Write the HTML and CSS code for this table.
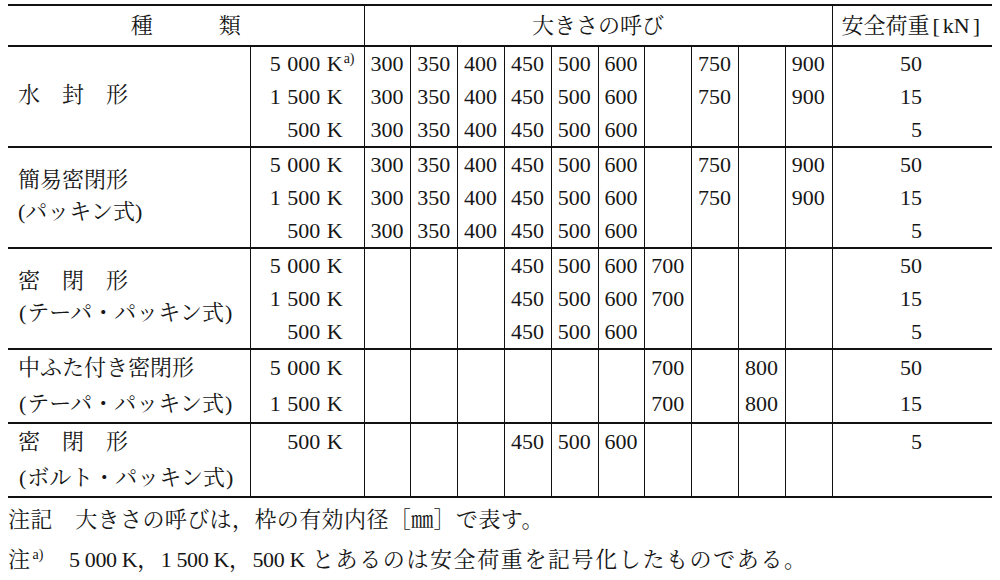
FILE: index.html
```html
<!DOCTYPE html>
<html lang="ja">
<head>
<meta charset="utf-8">
<title>安全荷重</title>
<link rel="stylesheet" href="styles.css">
</head>
<body>
<div class="page">
<table class="spec">
<colgroup>
<col class="c-type"><col class="c-load">
<col class="c-size"><col class="c-size"><col class="c-size"><col class="c-size"><col class="c-size">
<col class="c-size"><col class="c-size"><col class="c-size"><col class="c-size"><col class="c-size">
<col class="c-safe">
</colgroup>
<thead>
<tr class="hrow">
<th colspan="2" class="h-type">種　　　類</th>
<th colspan="10" class="h-size">大きさの呼び</th>
<th class="h-safe">安全荷重<span class="br">[</span>kN<span class="br">]</span></th>
</tr>
</thead>
<tbody>
<!-- 水封形 -->
<tr class="g-first r">
<td rowspan="3" class="type">水　封　形</td>
<td class="load">5 000 K<span class="sup">a)</span></td>
<td>300</td><td>350</td><td>400</td><td>450</td><td>500</td><td>600</td><td></td><td>750</td><td></td><td>900</td>
<td class="safe">50</td>
</tr>
<tr class="r">
<td class="load">1 500 K</td>
<td>300</td><td>350</td><td>400</td><td>450</td><td>500</td><td>600</td><td></td><td>750</td><td></td><td>900</td>
<td class="safe">15</td>
</tr>
<tr class="r">
<td class="load">500 K</td>
<td>300</td><td>350</td><td>400</td><td>450</td><td>500</td><td>600</td><td></td><td></td><td></td><td></td>
<td class="safe">5</td>
</tr>
<!-- 簡易密閉形 -->
<tr class="g-first r">
<td rowspan="3" class="type">簡易密閉形<br>(パッキン式)</td>
<td class="load">5 000 K</td>
<td>300</td><td>350</td><td>400</td><td>450</td><td>500</td><td>600</td><td></td><td>750</td><td></td><td>900</td>
<td class="safe">50</td>
</tr>
<tr class="r">
<td class="load">1 500 K</td>
<td>300</td><td>350</td><td>400</td><td>450</td><td>500</td><td>600</td><td></td><td>750</td><td></td><td>900</td>
<td class="safe">15</td>
</tr>
<tr class="r">
<td class="load">500 K</td>
<td>300</td><td>350</td><td>400</td><td>450</td><td>500</td><td>600</td><td></td><td></td><td></td><td></td>
<td class="safe">5</td>
</tr>
<!-- 密閉形 テーパ -->
<tr class="g-first r">
<td rowspan="3" class="type">密　閉　形<br><span class="paren">(</span>テーパ・パッキン式<span class="paren">)</span></td>
<td class="load">5 000 K</td>
<td></td><td></td><td></td><td>450</td><td>500</td><td>600</td><td>700</td><td></td><td></td><td></td>
<td class="safe">50</td>
</tr>
<tr class="r">
<td class="load">1 500 K</td>
<td></td><td></td><td></td><td>450</td><td>500</td><td>600</td><td>700</td><td></td><td></td><td></td>
<td class="safe">15</td>
</tr>
<tr class="r">
<td class="load">500 K</td>
<td></td><td></td><td></td><td>450</td><td>500</td><td>600</td><td></td><td></td><td></td><td></td>
<td class="safe">5</td>
</tr>
<!-- 中ふた付き密閉形 -->
<tr class="g-first r2">
<td rowspan="2" class="type tall">中ふた付き密閉形<br><span class="paren">(</span>テーパ・パッキン式<span class="paren">)</span></td>
<td class="load">5 000 K</td>
<td></td><td></td><td></td><td></td><td></td><td></td><td>700</td><td></td><td>800</td><td></td>
<td class="safe">50</td>
</tr>
<tr class="r2">
<td class="load">1 500 K</td>
<td></td><td></td><td></td><td></td><td></td><td></td><td>700</td><td></td><td>800</td><td></td>
<td class="safe">15</td>
</tr>
<!-- 密閉形 ボルト -->
<tr class="g-first r2">
<td rowspan="2" class="type tall">密　閉　形<br><span class="paren">(</span>ボルト・パッキン式<span class="paren">)</span></td>
<td class="load">500 K</td>
<td></td><td></td><td></td><td>450</td><td>500</td><td>600</td><td></td><td></td><td></td><td></td>
<td class="safe">5</td>
</tr>
<tr class="r2 last">
<td class="load"></td>
<td></td><td></td><td></td><td></td><td></td><td></td><td></td><td></td><td></td><td></td>
<td class="safe"></td>
</tr>
</tbody>
</table>
<div class="notes">
<p class="note">注記　大きさの呼びは，枠の有効内径［㎜］で表す。</p>
<p class="note note-wide">注<span class="nsup">a)</span>　<span class="num">5 000 K</span>，<span class="num">1 500 K</span>，<span class="num">500 K</span> とあるのは安全荷重を記号化したものである。</p>
</div>
</div>
</body>
</html>
```

FILE: styles.css
```css
html, body {
  margin: 0;
  padding: 0;
  background: #ffffff;
}

body {
  font-family: "Liberation Serif", "Noto Serif CJK JP", "Noto Sans CJK JP", serif;
  font-size: 22px;
  color: #161616;
}

.page {
  padding: 4px 8px 0 8px;
}

.spec {
  width: 984px;
  table-layout: fixed;
  border-collapse: collapse;
  border-top: 2px solid #111;
  border-bottom: 2px solid #111;
}

.c-type { width: 242px; }
.c-load { width: 114px; }
.c-size { width: 46.8px; }
.c-safe { width: 160px; }

.spec th,
.spec td {
  padding: 0;
  line-height: 1;
  vertical-align: middle;
  white-space: nowrap;
  font-weight: normal;
}

.hrow th {
  height: 39px;
  border-bottom: 2px solid #111;
  text-align: center;
}

.h-size,
.h-safe {
  border-left: 1.5px solid #111;
}

.h-safe {
  text-align: center;
  padding-left: 2px;
}

.br {
  margin: 0 3px;
}

.spec td {
  border-left: 1.5px solid #111;
  padding-left: 6px;
  text-align: left;
}

.spec td.type {
  border-left: none;
  padding-left: 10px;
  padding-bottom: 3px;
  line-height: 32px;
}

.spec td.type.tall {
  line-height: 36px;
  padding-bottom: 0;
  vertical-align: top;
}

.paren {
  margin: 0 1px;
}

.spec td.load {
  text-align: right;
  padding-left: 0;
  padding-right: 21px;
  word-spacing: 1px;
}

.sup {
  font-size: 14px;
  vertical-align: 8px;
  margin-left: 1px;
  margin-right: -12px;
}

.spec td.safe {
  text-align: right;
  padding-left: 0;
  padding-right: 70px;
}

.r td { height: 33px; }
.r2 td { height: 35px; }

.g-first td {
  border-top: 2px solid #111;
}

.notes {
  padding-top: 4px;
}

.note {
  margin: 0;
  line-height: 35px;
  letter-spacing: 0.4px;
}

.note-wide {
  letter-spacing: 1.6px;
}

.nsup {
  font-size: 14px;
  vertical-align: 8px;
  margin-left: 1px;
  margin-right: 2px;
  letter-spacing: 0;
}

.num {
  font-size: 22px;
  letter-spacing: -0.4px;
}
```
